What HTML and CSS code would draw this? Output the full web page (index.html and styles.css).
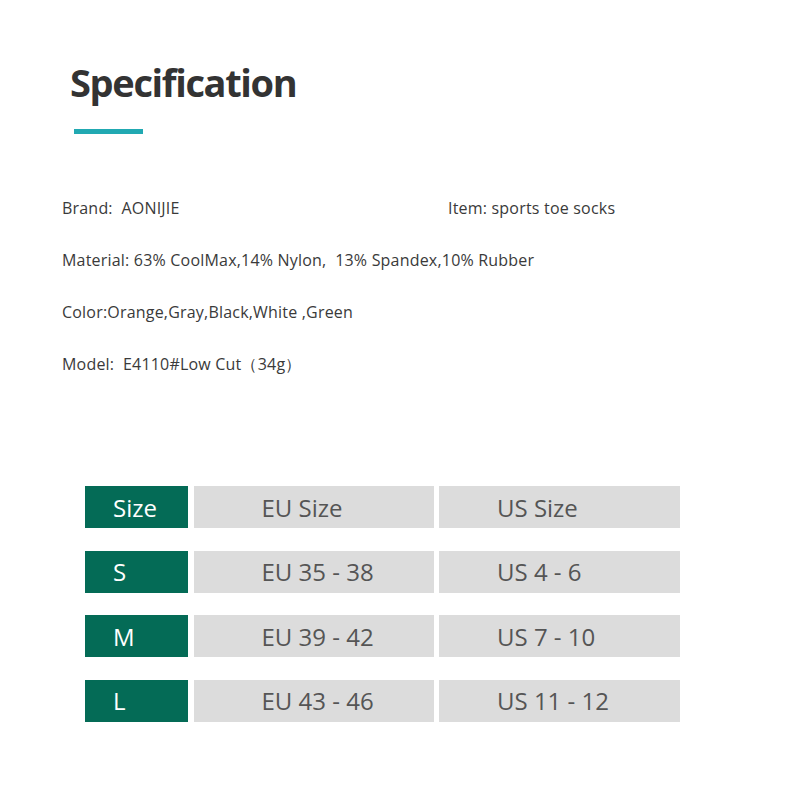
FILE: index.html
```html
<!DOCTYPE html>
<html>
<head>
<meta charset="utf-8">
<link rel="stylesheet" href="styles.css">
</head>
<body>
<div class="page">
  <h1 class="title">Specification</h1>
  <div class="underline"></div>
  <div class="specs">
    <div class="spec-row two">
      <span class="spec-left">Brand:&nbsp; AONIJIE</span>
      <span class="spec-right">Item: sports toe socks</span>
    </div>
    <div class="spec-row">Material: 63% CoolMax,14% Nylon,&nbsp; 13% Spandex,10% Rubber</div>
    <div class="spec-row">Color:Orange,Gray,Black,White ,Green</div>
    <div class="spec-row">Model:&nbsp; E4110#Low Cut（34g）</div>
  </div>
  <div class="size-table">
    <div class="cell key">Size</div>
    <div class="cell eu">EU Size</div>
    <div class="cell us">US Size</div>
    <div class="cell key">S</div>
    <div class="cell eu">EU 35 - 38</div>
    <div class="cell us">US 4 - 6</div>
    <div class="cell key">M</div>
    <div class="cell eu">EU 39 - 42</div>
    <div class="cell us">US 7 - 10</div>
    <div class="cell key">L</div>
    <div class="cell eu">EU 43 - 46</div>
    <div class="cell us">US 11 - 12</div>
  </div>
</div>
</body>
</html>
```

FILE: styles.css
```css
html, body {
  margin: 0;
  padding: 0;
  background: #ffffff;
}
.page {
  width: 800px;
  height: 800px;
  font-family: "Open Sans", "DejaVu Sans", sans-serif;
  color: #333;
}
.title {
  margin: 0;
  padding: 63px 0 0 70px;
  font-size: 38px;
  line-height: 38px;
  font-weight: 700;
  color: #333333;
  letter-spacing: -1.35px;
}
.underline {
  margin: 28px 0 0 74px;
  width: 69px;
  height: 5px;
  background: #21a9b2;
}
.specs {
  margin-top: 48px;
  padding-left: 62px;
  font-size: 16px;
  letter-spacing: 0.2px;
  color: #3a3a3a;
}
.spec-row {
  height: 52px;
  line-height: 52px;
  white-space: pre;
}
.spec-row.two {
  display: flex;
}
.spec-left {
  width: 386px;
}
.size-table {
  margin-top: 96px;
  margin-left: 85px;
  display: grid;
  grid-template-columns: 103px 240px 241px;
  grid-auto-rows: 42px;
  column-gap: 5.5px;
  row-gap: 22.5px;
  font-size: 24px;
}
.cell {
  display: flex;
  align-items: center;
}
.key {
  background: #046b56;
  color: #ffffff;
  padding-left: 28px;
}
.eu, .us {
  background: #dcdcdc;
  color: #555555;
}
.eu {
  padding-left: 68px;
}
.us {
  padding-left: 58px;
}
```
